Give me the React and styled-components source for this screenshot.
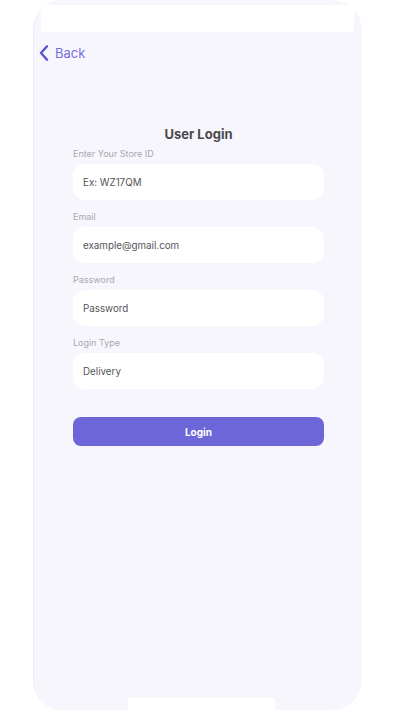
import React from "react";
import styled, { createGlobalStyle } from "styled-components";

const Global = createGlobalStyle`
  html, body { margin: 0; padding: 0; background: #ffffff; }
  body { font-family: Inter, "Noto Sans", sans-serif; }
  * { box-sizing: border-box; }
`;

const Page = styled.div`
  width: 400px;
  height: 710px;
  background: #ffffff;
  padding-left: 33px;
  overflow: hidden;
`;

const Phone = styled.div`
  width: 329px;
  height: 710px;
  background: #f7f6fd;
  border-radius: 30px;
  border-left: 1px solid #eeedf6;
  overflow: hidden;
  display: flex;
  flex-direction: column;
`;

const StatusBar = styled.div`
  height: 27px;
  margin: 5px 8px 0 7px;
  background: #ffffff;
  flex-shrink: 0;
`;

const BackRow = styled.div`
  display: flex;
  align-items: center;
  gap: 6px;
  height: 20px;
  margin-top: 10.5px;
  padding-left: 5px;
  color: #776fdf;
  font-size: 13px;
  line-height: 20px;
`;

const Form = styled.div`
  display: flex;
  flex-direction: column;
  margin-top: 63px;
  padding: 0 38px 0 39px;
`;

const Title = styled.h1`
  margin: 0 0 6.5px;
  text-align: center;
  font-size: 13px;
  line-height: 16px;
  font-weight: 700;
  color: #4a4a4c;
`;

const Field = styled.div`
  display: flex;
  flex-direction: column;
  gap: 4px;
  margin-bottom: 11px;
`;

const Label = styled.div`
  font-size: 9px;
  line-height: 12px;
  color: #a8a8ac;
`;

const Input = styled.div`
  height: 36px;
  border-radius: 12px;
  background: #ffffff;
  display: flex;
  align-items: center;
  padding-left: 10px;
  font-size: 9.8px;
  color: #545457;
`;

const Button = styled.button`
  margin-top: 17px;
  height: 29px;
  border: none;
  border-radius: 8px;
  background: #6c66d9;
  color: #ffffff;
  font-family: inherit;
  font-size: 10px;
  font-weight: 700;
`;

const HomeBar = styled.div`
  margin-top: auto;
  margin-left: 94px;
  width: 147px;
  height: 12px;
  background: #ffffff;
  flex-shrink: 0;
`;

const fields = [
  { label: "Enter Your Store ID", value: "Ex: WZ17QM" },
  { label: "Email", value: "example@gmail.com" },
  { label: "Password", value: "Password" },
  { label: "Login Type", value: "Delivery" },
];

export default function App() {
  return (
    <Page>
      <Global />
      <Phone>
        <StatusBar />
        <BackRow>
          <svg width="10" height="16" viewBox="0 0 10 16" fill="none">
            <path d="M8 1.3 L2 8 L8 14.7" stroke="#5a52d6" strokeWidth="2.4" strokeLinecap="round" strokeLinejoin="round" />
          </svg>
          <span>Back</span>
        </BackRow>
        <Form>
          <Title>User Login</Title>
          {fields.map((f) => (
            <Field key={f.label}>
              <Label>{f.label}</Label>
              <Input>{f.value}</Input>
            </Field>
          ))}
          <Button>Login</Button>
        </Form>
        <HomeBar />
      </Phone>
    </Page>
  );
}
